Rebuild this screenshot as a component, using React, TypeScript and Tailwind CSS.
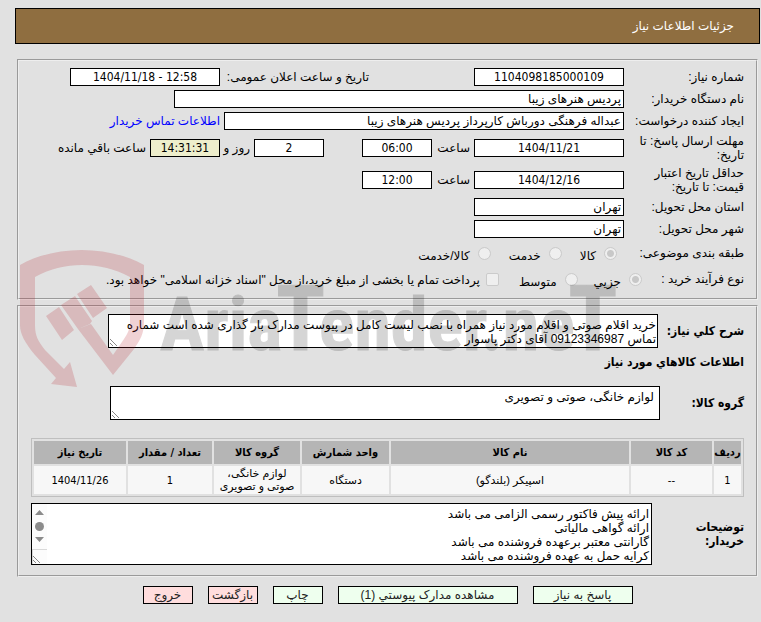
import React from "react";

const boxBase = "h-[18px] border border-black px-[2px] text-[12px] leading-[16px] text-black outline-none";
const numeric = "text-center font-['DejaVu_Sans_Condensed','DejaVu_Sans',sans-serif]";
const boldFont = "font-['DejaVu_Sans_Condensed','DejaVu_Sans',sans-serif] font-bold";

function Field({ id, value, className, dir }: { id: string; value: string; className: string; dir?: string }) {
  return <input id={id} dir={dir} readOnly defaultValue={value} className={`${boxBase} ${className}`} />;
}

function Row({ label, htmlFor, className, children }: { label: string; htmlFor?: string; className: string; children: React.ReactNode }) {
  return (
    <div className={`flex items-center ${className}`}>
      <label htmlFor={htmlFor} className="w-[120px] shrink-0 leading-[14px]">
        {label}
      </label>
      <div className="flex min-w-0 flex-1 items-center gap-1 whitespace-nowrap">{children}</div>
    </div>
  );
}

function Option({ name, label, checked }: { name: string; label: string; checked?: boolean }) {
  return (
    <label className="flex h-[13px] items-start gap-[8px]">
      <input
        type="radio"
        name={name}
        disabled
        defaultChecked={checked}
        className="h-[13px] w-[13px] shrink-0 appearance-none rounded-full border border-[#cbcbcb] bg-[#efefef] bg-clip-padding checked:bg-[radial-gradient(circle,#c8c8c8_0_3px,#efefef_4px)]"
      />
      <span className="pt-[2px] leading-[14px]">{label}</span>
    </label>
  );
}

function Grip() {
  return (
    <svg aria-hidden="true" className="absolute bottom-[2px] left-[2px] h-[7px] w-[7px]" viewBox="0 0 7 7" fill="none" stroke="#555" strokeWidth="1" strokeDasharray="1 .4">
      <path d="M0 0L7 7M0 4L3 7" />
    </svg>
  );
}

function Area({ id, value, className, children }: { id: string; value: string; className: string; children?: React.ReactNode }) {
  return (
    <div className="relative w-full">
      <textarea
        id={id}
        readOnly
        defaultValue={value}
        className={`block w-full resize-none overflow-hidden border border-black bg-white text-[12px] leading-[14px] outline-none ${className}`}
      />
      {children}
      <Grip />
    </div>
  );
}

const columns = [
  { title: "ردیف", width: "w-[27px]", value: "1" },
  { title: "کد کالا", width: "w-[81px]", value: "--" },
  { title: "نام کالا", width: "", value: "اسپیکر (بلندگو)" },
  { title: "واحد شمارش", width: "w-[87px]", value: "دستگاه" },
  { title: "گروه کالا", width: "w-[86px]", value: "لوازم خانگی، صوتی و تصویری" },
  { title: "تعداد / مقدار", width: "w-[84px]", value: "1" },
  { title: "تاریخ نیاز", width: "w-[92px]", value: "1404/11/26" },
];

const actions = [
  { title: "پاسخ به نیاز", style: "w-[100px] bg-[#eeffee]" },
  { title: "مشاهده مدارک پیوستي (1)", style: "w-[180px] bg-[#eeffee]" },
  { title: "چاپ", style: "w-[50px] bg-[#eeffee]" },
  { title: "بازگشت", style: "w-[50px] bg-[#ffdddd]" },
  { title: "خروج", style: "w-[50px] bg-[#ffdddd]" },
];

function Watermark() {
  return (
    <div dir="ltr" aria-hidden="true" className="pointer-events-none absolute top-[250px] left-[20px] flex">
      <svg className="h-[137px] w-[125px]" viewBox="0 0 125 137" fill="#b3202a" fillOpacity=".2">
        <path d="M0 15C35-5 88-5 124 15V72C124 84 120 90 114 99L93 125L58 79L71 74L93 105L104 89C108 83 110 79 110 71V27C81 11 43 11 15 27V75C15 86 18 91 25 100L44 119L50 112L57 137L31 134L36 128L15 105C5 93 0 84 0 75Z" />
        <path d="M26 66L39 57L54 80L42 90ZM41 55L55 46L72 71L70 74L58 79ZM57 44L71 35L87 58L73 68Z" />
      </svg>
      <span className="pt-[20px] pl-[15px] font-['Liberation_Sans_Narrow','Roboto_Condensed','Liberation_Sans',sans-serif] text-[74px] leading-[100px] font-bold whitespace-nowrap text-black opacity-16 [-webkit-text-stroke:1px_black]">
        Aria<span className="-mx-[6px] text-[90px]">T</span>ender.ne<span className="-ml-[6px] text-[90px]">T</span>
      </span>
    </div>
  );
}

export default function App() {
  return (
    <div
      dir="rtl"
      lang="fa"
      className="relative min-h-screen overflow-hidden bg-[#e1e1e1] pt-2 font-['Liberation_Sans','DejaVu_Sans',sans-serif] text-[12px] text-black"
    >
      <header className="mr-px ml-[15px] flex h-9 items-center border border-black bg-[#8f6e40] pr-[25px] text-white">
        <h1>جزئیات اطلاعات نیاز</h1>
      </header>

      <main className="mt-[15px] mr-[3px] ml-[17px]">
        <fieldset className="border-2 border-[#eeeeee] [border-style:groove] pt-[5px] pr-[12px] pb-[6px]">
          <Row label="شماره نیاز:" htmlFor="number" className="h-[22px]">
            <Field id="number" value="1104098185000109" className={`w-[150px] bg-white ${numeric}`} />
            <div className="mr-[101px] flex items-center gap-1">
              <label htmlFor="announce" className="w-[145px]">
                تاریخ و ساعت اعلان عمومی:
              </label>
              <Field id="announce" dir="ltr" value="1404/11/18 - 12:58" className={`w-[150px] bg-white ${numeric}`} />
            </div>
          </Row>
          <Row label="نام دستگاه خریدار:" htmlFor="buyer" className="h-[22px]">
            <Field id="buyer" value="پردیس هنرهای زیبا" className="w-[450px] bg-white" />
          </Row>
          <Row label="ایجاد کننده درخواست:" htmlFor="creator" className="h-[22px]">
            <Field id="creator" value="عبداله فرهنگی دورباش کارپرداز پردیس هنرهای زیبا" className="w-[400px] bg-white" />
            <a href="#contact" className="text-[#0000ff]">
              اطلاعات تماس خریدار
            </a>
          </Row>
          <Row label="مهلت ارسال پاسخ: تا تاریخ:" htmlFor="deadline" className="h-[32px]">
            <Field id="deadline" value="1404/11/21" className={`w-[150px] bg-white ${numeric}`} />
            <label htmlFor="deadline-time" className="w-[34px]">
              ساعت
            </label>
            <Field id="deadline-time" value="06:00" className={`w-[70px] bg-white ${numeric}`} />
            <div className="mr-[34px] flex items-center gap-1">
              <Field id="days" value="2" className={`w-[70px] bg-white ${numeric}`} />
              <label htmlFor="days" className="w-[26px]">
                روز و
              </label>
              <Field id="remaining" value="14:31:31" className={`w-[70px] bg-[#eeeecc] ${numeric}`} />
              <label htmlFor="remaining">ساعت باقي مانده</label>
            </div>
          </Row>
          <Row label="حداقل تاریخ اعتبار قیمت: تا تاریخ:" htmlFor="validity" className="h-[32px]">
            <Field id="validity" value="1404/12/16" className={`w-[150px] bg-white ${numeric}`} />
            <label htmlFor="validity-time" className="w-[34px]">
              ساعت
            </label>
            <Field id="validity-time" value="12:00" className={`w-[70px] bg-white ${numeric}`} />
          </Row>
          <Row label="استان محل تحویل:" htmlFor="province" className="h-[22px]">
            <Field id="province" value="تهران" className="w-[150px] bg-white" />
          </Row>
          <Row label="شهر محل تحویل:" htmlFor="city" className="h-[22px]">
            <Field id="city" value="تهران" className="w-[150px] bg-white" />
          </Row>
          <Row label="طبقه بندی موضوعی:" className="h-[26px]">
            <div className="flex gap-[18px] pr-[7px]">
              <Option name="category" label="کالا" checked />
              <Option name="category" label="خدمت" />
              <Option name="category" label="کالا/خدمت" />
            </div>
          </Row>
          <div className="flex h-[26px] items-center whitespace-nowrap">
            <span className="w-[102px] shrink-0">نوع فرآیند خرید :</span>
            <div className="flex gap-[16px]">
              <Option name="process" label="جزيي" checked />
              <Option name="process" label="متوسط" />
              <label className="mr-[4px] flex h-[13px] items-start gap-[6px]">
                <input
                  type="checkbox"
                  disabled
                  className="h-[13px] w-[13px] shrink-0 appearance-none rounded-[2px] border border-[#cbcbcb] bg-[#efefef]"
                />
                <span className="leading-[14px]">
                  پرداخت تمام یا بخشی از مبلغ خرید،از محل "اسناد خزانه اسلامی" خواهد بود.
                </span>
              </label>
            </div>
          </div>
        </fieldset>

        <fieldset className="mt-[5px] border-2 border-[#eeeeee] [border-style:groove] pt-[7px] pr-[12px] pb-[10px] pl-[12px]">
          <div className="flex items-center pl-[77px]">
            <label htmlFor="summary" className={`w-[86px] shrink-0 ${boldFont}`}>
              شرح کلي نیاز:
            </label>
            <Area
              id="summary"
              value="خرید اقلام صوتی و اقلام مورد نیاز همراه با نصب لیست کامل در پیوست مدارک بار گذاری شده است شماره تماس 09123346987 آقای دکتر پاسوار"
              className="h-[34px] pt-[3px] pr-[1px] pl-[4px]"
            />
          </div>
          <h2 className={`mt-[5px] leading-[18px] ${boldFont}`}>اطلاعات کالاهاي مورد نیاز</h2>
          <div className="mt-[15px] flex items-center pl-[79px]">
            <label htmlFor="group" className={`w-[84px] shrink-0 ${boldFont}`}>
              گروه کالا:
            </label>
            <Area id="group" value="لوازم خانگی، صوتی و تصویری" className="h-[34px] px-[5px] pt-[3px]" />
          </div>

          <table className="mt-[18px] w-full table-fixed border-separate border-spacing-[2px] border border-[#bfbfbf] text-center text-[11px] leading-[13px]">
            <thead>
              <tr className="h-[23px]">
                {columns.map((c) => (
                  <th key={c.title} scope="col" className={`bg-[#b5b5b5] p-0 whitespace-nowrap ${boldFont} ${c.width}`}>
                    {c.title}
                  </th>
                ))}
              </tr>
            </thead>
            <tbody>
              <tr className="h-[28px]">
                {columns.map((c) => (
                  <td
                    key={c.title}
                    className={`bg-[#f7f7f7] px-[2px] py-0 ${/^[\d/]+$/.test(c.value) ? "font-['DejaVu_Sans_Condensed','DejaVu_Sans',sans-serif]" : ""}`}
                  >
                    {c.value}
                  </td>
                ))}
              </tr>
            </tbody>
          </table>

          <div className="mt-[6px] flex items-center">
            <label htmlFor="notes" className={`w-[92px] shrink-0 pl-[20px] leading-[14px] ${boldFont}`}>
              توضیحات خریدار:
            </label>
            <Area
              id="notes"
              value={
                "ارائه پیش فاکتور رسمی الزامی می باشد\nارائه گواهی مالیاتی\nگارانتی معتبر برعهده فروشنده می باشد\nکرایه حمل به عهده فروشنده می باشد"
              }
              className="h-[62px] pt-[3px] pr-[2px] pl-[18px]"
            >
              <svg aria-hidden="true" className="absolute top-px left-px h-[60px] w-[15px]" viewBox="0 0 15 60">
                <path d="M0 0H15V60H0Z" fill="#fcfcfc" />
                <path d="M0 45.5H15M.5 45V60" stroke="#d9d9d9" fill="none" />
                <path d="M3 11L7.500 6L12 11ZM3 33L7.500 38L12 33Z" fill="#8b8b8b" />
                <circle cx="7.500" cy="22.500" r="4.500" fill="#8b8b8b" />
              </svg>
            </Area>
          </div>
        </fieldset>

        <div className="mt-[9px] flex justify-center gap-[15px]">
          {actions.map((a) => (
            <button key={a.title} type="button" className={`flex h-[18px] items-center justify-center border border-black leading-[16px] whitespace-nowrap text-[#222] ${a.style}`}>
              {a.title}
            </button>
          ))}
        </div>
      </main>

      <Watermark />
    </div>
  );
}
